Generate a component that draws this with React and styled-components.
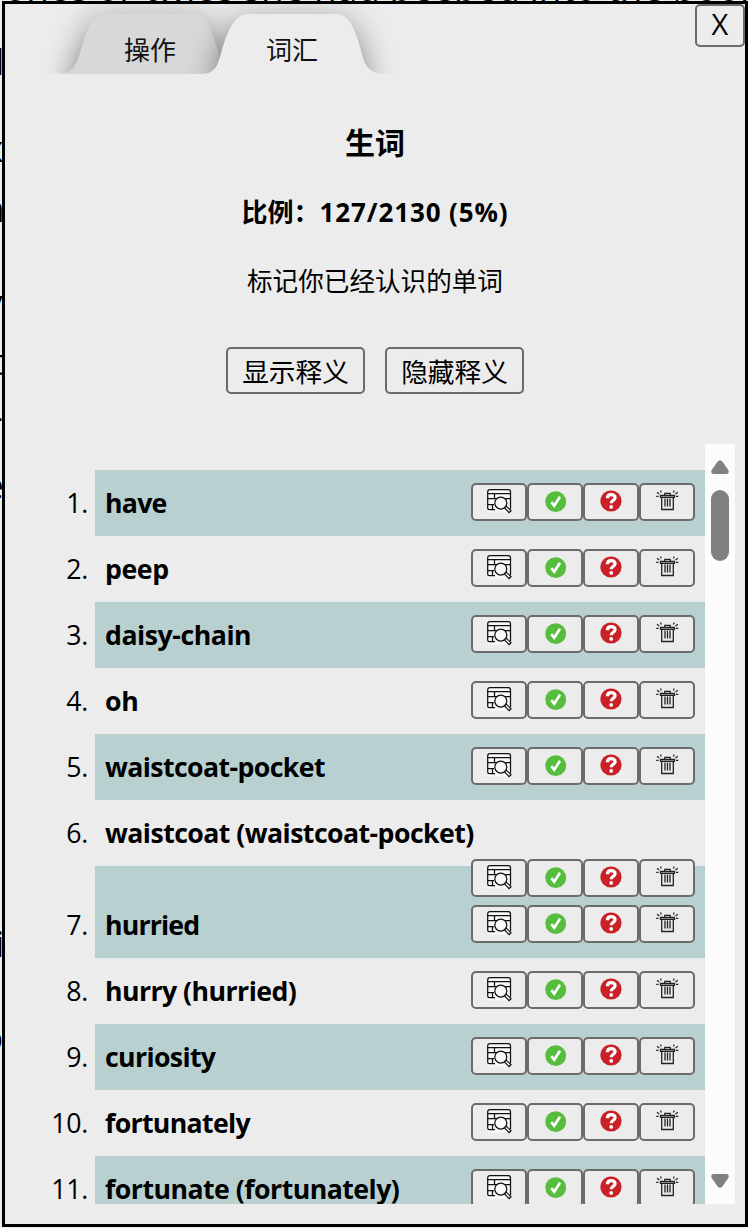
import React from 'react';
import styled, { createGlobalStyle } from 'styled-components';

const Global = createGlobalStyle`
  * { box-sizing: border-box; }
  html, body { margin: 0; height: 1228px; overflow: hidden; background: #ececec; }
  body { font-family: "Open Sans", "Noto Sans CJK SC", sans-serif; color: #000; }
`;

const Page = styled.div`
  position: relative;
  width: 748px;
  height: 1228px;
  overflow: hidden;
  padding: 1px 0 0 2px;
  background: #e9f1ef;
`;

const Backdrop = styled.span`
  position: absolute;
  left: ${p => p.$x}px;
  top: ${p => p.$y}px;
  font-size: 37px;
  line-height: 50px;
  white-space: nowrap;
`;

const Panel = styled.main`
  position: relative;
  width: 746px;
  height: 1226px;
  border: 3px solid #000;
  background: #ececec;
  display: flex;
  flex-direction: column;
`;

const TabBar = styled.nav`
  position: relative;
  height: 70px;
  display: flex;
  padding-left: 74px;
`;

const TabArt = styled.svg`
  position: absolute;
  left: 0;
  top: 0;
`;

const Tab = styled.span`
  position: relative;
  width: 142px;
  padding-top: 11px;
  text-align: center;
  font-size: 26px;
  line-height: 70px;
  color: #111;
`;

const Close = styled.button`
  position: absolute;
  right: 0;
  top: 0;
  width: 50px;
  height: 43px;
  padding: 0 0 3px;
  border: 2px solid #6b6b6b;
  border-radius: 5px;
  background: #ececec;
  color: #000;
  font: 29px/36px "Open Sans", sans-serif;
`;

const Intro = styled.header`
  display: flex;
  flex-direction: column;
  align-items: center;
  height: 370px;
`;

const Title = styled.h2`
  margin: 47px 0 0;
  font-size: 30px;
  line-height: 44px;
  font-weight: 700;
`;

const Ratio = styled.h3`
  margin: 27px 0 0;
  font-size: 26px;
  line-height: 40px;
  font-weight: 700;
  white-space: nowrap;
`;

const Figures = styled.span`
  letter-spacing: 0.88px;
`;

const Hint = styled.p`
  margin: 30px 0 0;
  font-size: 25.6px;
  line-height: 40px;
`;

const Actions = styled.div`
  display: flex;
  gap: 20px;
  margin-top: 45px;
`;

const Action = styled.button`
  width: 139px;
  height: 47px;
  padding: 0;
  border: 2px solid #6b6b6b;
  border-radius: 5px;
  background: #ececec;
  color: #000;
  font: 26.7px/43px "Noto Sans CJK SC", sans-serif;
`;

const Scroller = styled.section`
  display: flex;
  width: 730px;
  height: 760px;
  overflow: hidden;
`;

const List = styled.ol`
  flex: 1;
  margin: 0;
  padding: 26px 0 0;
  list-style: none;
`;

const Row = styled.li`
  display: flex;
  height: ${p => (p.$tall ? 92 : 66)}px;
`;

const Num = styled.span`
  width: 90px;
  padding-right: 7px;
  text-align: right;
  align-self: flex-end;
  font-size: 26.7px;
  line-height: 66px;
  letter-spacing: -0.3px;
`;

const Entry = styled.div`
  flex: 1;
  display: flex;
  flex-wrap: ${p => (p.$wrap ? 'wrap' : 'nowrap')};
  justify-content: space-between;
  align-items: flex-end;
  padding: 0 10px;
  background: ${p => (p.$shade ? '#b8d1d0' : 'transparent')};
`;

const Word = styled.b`
  font-size: 26.7px;
  line-height: 66px;
  font-weight: 700;
  white-space: nowrap;
  letter-spacing: ${p => p.$track || 0}px;
`;

const Tools = styled.div`
  position: relative;
  display: flex;
  margin: ${p => (p.$wrap ? '-7px 0 0 auto' : '0 0 15px')};
`;

const Tool = styled.button`
  width: 56px;
  height: 38px;
  padding: 0;
  border: 2px solid #6b6b6b;
  border-radius: 5px;
  background: #ececec;
  display: flex;
  align-items: center;
  justify-content: center;
  svg { display: block; }
`;

const Track = styled.div`
  width: 30px;
  height: 760px;
  padding: 16px 0;
  background: #fcfcfc;
  display: flex;
  flex-direction: column;
  align-items: center;
`;

const Thumb = styled.div`
  width: 18px;
  height: 71px;
  margin: 16px 0 auto;
  border-radius: 9px;
  background: #808080;
`;

const Lookup = () => (
  <svg width="52" height="34" viewBox="0 0 52 34">
    <g transform="translate(14 4)" fill="none" stroke="#111" strokeWidth="1.25">
      <path d="M.7 23.500V1H23.500v22.500z" fill="#f8f8f8" stroke="none" />
      <path d="M8 20.700H2.200Q.7 20.700.7 19V3Q.7.7 3 .7h18.500Q23.500.7 23.500 3v17M.7 4.500h22.800M.7 9.700h22.800M.7 15.500H7M7.500 4.500v5M5.500 15.500v5" />
      <circle cx="13.800" cy="14" r="6" fill="#fafafa" />
      <path d="M18 18.200l1.500-.8 4.500 4.300-1.900 1.900-4.400-4.500z" fill="#fff" />
    </g>
  </svg>
);

const Known = () => (
  <svg width="52" height="34" viewBox="0 0 52 34">
    <circle cx="26.700" cy="16.700" r="10.400" fill="#57bd3d" />
    <path d="M22.300 17.200l2.900 3.600 5.800-9" fill="none" stroke="#fff" strokeWidth="2.700" />
  </svg>
);

const Unsure = () => (
  <svg width="52" height="34" viewBox="0 0 52 34">
    <circle cx="26" cy="16" r="10.600" fill="#ca2027" />
    <path d="M22.400 13.300c0-5 7.700-4.600 7.700-.6 0 2.700-3.900 2.500-3.900 5.600" fill="none" stroke="#fff" strokeWidth="3.200" />
    <circle cx="26.200" cy="21.900" r="1.900" fill="#fff" />
  </svg>
);

const Trash = () => (
  <svg width="52" height="34" viewBox="0 0 52 34">
    <g fill="none" stroke="#222" strokeWidth="1.300">
      <path d="M20.700 12.500v12h11.600v-12M24 13.500v8M26.500 13.500v8M29 13.500v8" />
      <path d="M19.500 10.500h14v1.800h-14zM23.800 10V8.300h5.400v1.800" />
      <path d="M15.200 11.300h2.300M16 7.300l2.300 1.700M19.500 5.500l.8 2M35 11.300h2.300M36.800 7.300l-2.300 1.700M33.200 5.500l-.8 2" strokeWidth="1.200" />
    </g>
  </svg>
);

const Arrow = ({ down }) => (
  <svg width="18" height="14" viewBox="0 0 18 14">
    <path
      transform={down ? 'rotate(180 9 7)' : undefined}
      d="M6.500 1.800Q9-1.200 11.500 1.800L17.300 10Q18.800 13.800 15.500 14H2.500Q-.8 13.800.7 10z"
      fill="#808080"
    />
  </svg>
);

const words = [
  { text: 'have', track: -0.75 },
  { text: 'peep', track: -0.4 },
  { text: 'daisy-chain', track: -0.46 },
  { text: 'oh', track: -0.2 },
  { text: 'waistcoat-pocket', track: -0.6 },
  { text: 'waistcoat (waistcoat-pocket)', wrap: true, track: -0.56 },
  { text: 'hurried', tall: true, track: -0.85 },
  { text: 'hurry (hurried)', track: -0.56 },
  { text: 'curiosity', track: -0.65 },
  { text: 'fortunately', track: -0.68 },
  { text: 'fortunate (fortunately)', track: -0.53 },
];

const pageText = [
  { text: 'once or twice she had peeped into the book her sister', x: 4, y: -38 },
  { text: 'l', x: -5, y: 36 },
  { text: 'x', x: -16, y: 123 },
  { text: 'n', x: -18, y: 183 },
  { text: 'y', x: -16, y: 277 },
  { text: 't', x: -10, y: 336 },
  { text: '-', x: -9, y: 391 },
  { text: 'e', x: -17, y: 460 },
  { text: 'i', x: -5, y: 918 },
  { text: 'o', x: -19, y: 1012 },
];

export default function App() {
  return (
    <Page>
      <Global />
      {pageText.map(t => (
        <Backdrop key={t.y} $x={t.x} $y={t.y}>{t.text}</Backdrop>
      ))}
      <Panel>
        <TabBar>
          <TabArt width="420" height="70" viewBox="5 4 420 70">
            <defs>
              <clipPath id="halo">
                <path d="M30 74Q38 30 58 4H388Q402 35 407 74z" />
              </clipPath>
              <clipPath id="back">
                <path d="M58 74C73 74 76 65 80 53C87 28 92 14 105 14H193C207 14 213 33 219 54V74z" />
              </clipPath>
              <filter id="soft" x="-30%" y="-100%" width="160%" height="300%" colorInterpolationFilters="sRGB">
                <feGaussianBlur stdDeviation="15" />
              </filter>
              <linearGradient id="fade" x1="0" x2="0" y1="14" y2="60" gradientUnits="userSpaceOnUse">
                <stop offset="0" stopOpacity=".14" />
                <stop offset=".4" stopOpacity=".32" />
                <stop offset="1" stopOpacity=".46" />
              </linearGradient>
            </defs>
            <g clipPath="url(#halo)">
              <path d="M66 110C73 74 76 65 80 53C87 28 92 14 105 14H193C207 14 213 33 219 54V110z" fill="url(#fade)" filter="url(#soft)" />
              <path d="M213 110C216 74 218 64 221 53C228 29 235 14 248 14H336C350 14 356 31 362 54L370 110z" fill="url(#fade)" filter="url(#soft)" />
            </g>
            <g clipPath="url(#back)">
              <path d="M58 4H222V74H58z" fill="#d8d8d8" />
              <path d="M213 110C216 74 218 64 221 53C228 29 235 14 248 14H336V110z" fill="url(#fade)" filter="url(#soft)" />
            </g>
            <path d="M201 74C216 74 218 64 221 53C228 29 235 14 248 14H336C350 14 356 31 362 54C365 68 372 74 383 74z" fill="#ececec" />
          </TabArt>
          <Tab>操作</Tab>
          <Tab>词汇</Tab>
          <Close>X</Close>
        </TabBar>
        <Intro>
          <Title>生词</Title>
          <Ratio>比例：<Figures>127/2130 (5%)</Figures></Ratio>
          <Hint>标记你已经认识的单词</Hint>
          <Actions>
            <Action>显示释义</Action>
            <Action>隐藏释义</Action>
          </Actions>
        </Intro>
        <Scroller>
          <List>
            {words.map((w, i) => (
              <Row key={w.text} $tall={w.tall}>
                <Num>{i + 1}.</Num>
                <Entry $shade={i % 2 === 0} $wrap={w.wrap}>
                  <Word $track={w.track}>{w.text}</Word>
                  <Tools $wrap={w.wrap}>
                    <Tool><Lookup /></Tool>
                    <Tool><Known /></Tool>
                    <Tool><Unsure /></Tool>
                    <Tool><Trash /></Tool>
                  </Tools>
                </Entry>
              </Row>
            ))}
          </List>
          <Track>
            <Arrow />
            <Thumb />
            <Arrow down />
          </Track>
        </Scroller>
      </Panel>
    </Page>
  );
}
